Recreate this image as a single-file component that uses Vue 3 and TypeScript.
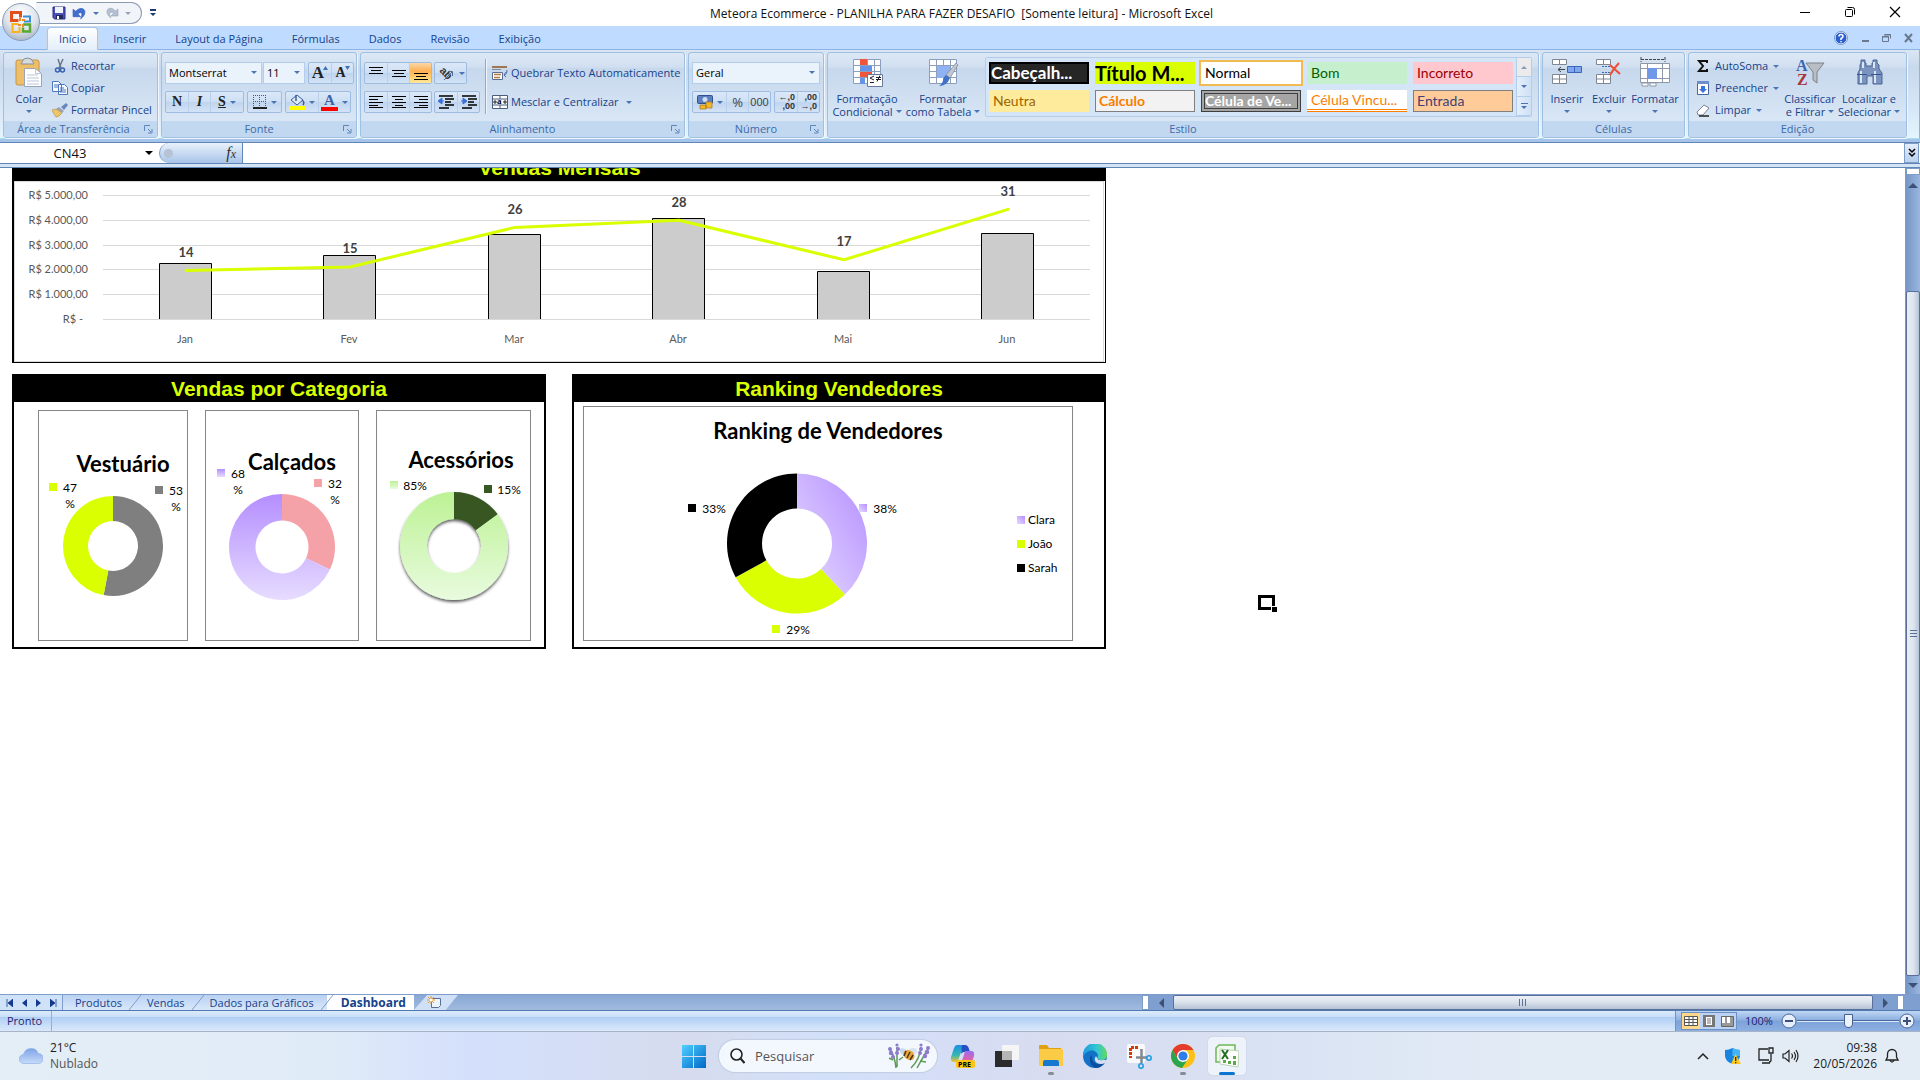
<script setup lang="ts">
interface Slice { value: number; fill: string }
interface Tag { x: number; y: number; fill: string; lines: string[] }
interface Donut { title: string; tx: number; ty: number; w: number; h: number; cx: number; cy: number; r: number; shadow?: boolean; slices: Slice[]; tags: Tag[] }

const ribbonTabs = ['Início', 'Inserir', 'Layout da Página', 'Fórmulas', 'Dados', 'Revisão', 'Exibição']
const sheetTabs = ['Produtos', 'Vendas', 'Dados para Gráficos', 'Dashboard']

const cellStyles = [
  { name: 'Cabeçalh...', cls: 'head' },
  { name: 'Título M...', cls: 'main-title' },
  { name: 'Normal', cls: 'normal' },
  { name: 'Bom', cls: 'good' },
  { name: 'Incorreto', cls: 'bad' },
  { name: 'Neutra', cls: 'neutral' },
  { name: 'Cálculo', cls: 'calc' },
  { name: 'Célula de Ve...', cls: 'check' },
  { name: 'Célula Vincu...', cls: 'linked' },
  { name: 'Entrada', cls: 'entry' },
]

const months = [
  { name: 'Jan', revenue: 2260, orders: 14, labelY: 76 },
  { name: 'Fev', revenue: 2590, orders: 15, labelY: 72 },
  { name: 'Mar', revenue: 3430, orders: 26, labelY: 33 },
  { name: 'Abr', revenue: 4080, orders: 28, labelY: 26 },
  { name: 'Mai', revenue: 1940, orders: 17, labelY: 65 },
  { name: 'Jun', revenue: 3480, orders: 31, labelY: 15 },
]
const axis = ['R$ 5.000,00', 'R$ 4.000,00', 'R$ 3.000,00', 'R$ 2.000,00', 'R$ 1.000,00']
const baseY = 138
const plotH = 124
const monthX = (i: number) => 172 + Math.round(i * 164.4)
const revenueY = (v: number) => Math.round(baseY - (v / 5000) * plotH)
const orderLine = months.map((m, i) => `${monthX(i)},${(140 - m.orders * 3.6).toFixed(1)}`).join(' ')

function ring(cx: number, cy: number, r: number, slices: Slice[]) {
  let sum = 0
  const inner = r / 2
  return slices.map((s) => {
    const a = (sum / 100) * 2 * Math.PI
    sum += s.value
    const b = (sum / 100) * 2 * Math.PI
    const big = s.value > 50 ? 1 : 0
    const p = (rad: number, t: number) => `${(cx + rad * Math.sin(t)).toFixed(2)} ${(cy - rad * Math.cos(t)).toFixed(2)}`
    return { fill: s.fill, d: `M${p(r, a)}A${r} ${r} 0 ${big} 1 ${p(r, b)}L${p(inner, b)}A${inner} ${inner} 0 ${big} 0 ${p(inner, a)}Z` }
  })
}

const categories: Donut[] = [
  {
    title: 'Vestuário', tx: 84, ty: 61, w: 148, h: 229, cx: 74, cy: 135, r: 50,
    slices: [{ value: 53, fill: '#7f7f7f' }, { value: 47, fill: '#d9ff00' }],
    tags: [{ x: 10, y: 72, fill: '#d9ff00', lines: ['47', '%'] }, { x: 116, y: 75, fill: '#7f7f7f', lines: ['53', '%'] }],
  },
  {
    title: 'Calçados', tx: 86, ty: 59, w: 152, h: 229, cx: 76, cy: 136, r: 53,
    slices: [{ value: 32, fill: '#f5a1a8' }, { value: 68, fill: 'url(#lilac)' }],
    tags: [{ x: 11, y: 58, fill: 'url(#lilac)', lines: ['68', '%'] }, { x: 108, y: 68, fill: '#f5a1a8', lines: ['32', '%'] }],
  },
  {
    title: 'Acessórios', tx: 84, ty: 57, w: 153, h: 229, cx: 77, cy: 135, r: 54, shadow: true,
    slices: [{ value: 15, fill: '#385723' }, { value: 85, fill: 'url(#mint)' }],
    tags: [{ x: 13, y: 70, fill: 'url(#mint)', lines: ['85%'] }, { x: 107, y: 74, fill: '#385723', lines: ['15%'] }],
  },
]

const sellers: Slice[] = [
  { value: 38, fill: 'url(#violet)' },
  { value: 29, fill: '#d9ff00' },
  { value: 33, fill: '#000' },
]
const sellerTags: Tag[] = [
  { x: 104, y: 97, fill: '#000', lines: ['33%'] },
  { x: 275, y: 97, fill: 'url(#violet)', lines: ['38%'] },
  { x: 188, y: 218, fill: '#d9ff00', lines: ['29%'] },
]
const sellerKey = [
  { name: 'Clara', fill: 'url(#violet)' },
  { name: 'João', fill: '#d9ff00' },
  { name: 'Sarah', fill: '#000' },
]
</script>

<template>
  <div class="window">
    <header class="titlebar">
      <div class="quick">
        <button aria-label="Salvar"><svg width="14" height="14"><path d="M1 1h12v12H2.500L1 11.500z" fill="#4a50b8" stroke="#2b2f86" /><path d="M3 1h8v6H3z" fill="#eef2ff" /><path d="M4 9h7v4H4z" fill="#23285e" /><path d="M5 10h2v3H5z" fill="#fff" /></svg></button>
        <button aria-label="Desfazer"><svg width="15" height="15" viewBox="0 0 14 14"><path d="M1 3v7h7L5.500 7.500C8 5 11 6 8 12c6-4 5-11-1-9.500Q5 3 3.500 5z" fill="#3f6fd0" stroke="#3059b4" stroke-width=".6" /></svg></button>
        <i class="car"></i>
        <button aria-label="Refazer"><svg width="14" height="14"><path d="M13 3v7H6l2.500-2.500C6 5 3 6 6 12 0 8 1 1 7 2.500q2 .5 3.500 2.500z" fill="#b4bfd0" stroke="#98a5ba" stroke-width=".6" /></svg></button>
        <i class="car dim"></i>
      </div>
      <button class="more" aria-label="Personalizar"><svg width="6" height="8"><path d="M0 0h6v2H0zM0 4h6L3 7z" fill="#1e3b70" /></svg></button>
      <h1>Meteora Ecommerce - PLANILHA PARA FAZER DESAFIO &nbsp;[Somente leitura] - Microsoft Excel</h1>
      <div class="win-buttons">
        <button aria-label="Minimizar"><svg width="12" height="12"><path d="M1 6.500h10" stroke="#000" /></svg></button>
        <button aria-label="Restaurar"><svg width="12" height="12" fill="none" stroke="#000"><rect x="1.500" y="3.500" width="7" height="7" rx="1" /><path d="M3.500 1.500h5q2 0 2 2v5" /></svg></button>
        <button aria-label="Fechar"><svg width="12" height="12"><path d="M1 1l10 10M11 1L1 11" stroke="#000" stroke-width="1.200" /></svg></button>
      </div>
    </header>

    <button class="orb" aria-label="Botão Office">
      <svg width="40" height="40" viewBox="0 0 40 40">
        <defs><radialGradient id="orbg" cx=".5" cy=".3" r=".7"><stop offset="0" stop-color="#fff" /><stop offset=".6" stop-color="#dfe4ec" /><stop offset="1" stop-color="#aab6c8" /></radialGradient></defs>
        <circle cx="20" cy="20" r="18.500" fill="url(#orbg)" stroke="#8b9bb5" />
        <g fill="none" stroke-width="3">
          <path d="M17.500 18.500h-7v-8h9v5" stroke="#e2501b" />
          <path d="M22 14.500h7v5h-6" stroke="#3c8fd8" stroke-width="2" />
          <path d="M17.500 22h-6v8h7v-5" stroke="#f7b41c" stroke-width="2" />
          <path d="M22 22.500h7v7h-7v-4" stroke="#5aa637" stroke-width="2.500" />
        </g>
        <path d="M18 16h2v3h-2zM21 17h3v2h-3zM17 22h3v2h-3zM21 22h2v3h-2z" fill="#f08a24" />
      </svg>
    </button>

    <nav class="tabs">
      <button v-for="(t, i) in ribbonTabs" :key="t" :class="{ on: i === 0 }">{{ t }}</button>
      <div class="doc-buttons">
        <button aria-label="Ajuda"><svg width="14" height="14"><circle cx="7" cy="7" r="6" fill="#2a5fd0" stroke="#fff" /><circle cx="7" cy="7" r="6.500" fill="none" stroke="#5577b8" stroke-width=".7" /><path d="M5 5.500Q5 3.500 7 3.500t2 2Q9 6.500 7 7.500V9M7 10v1.300" fill="none" stroke="#fff" stroke-width="1.500" /></svg></button>
        <button aria-label="Minimizar pasta"><svg width="10" height="10"><path d="M2 8h7" stroke="#69788f" stroke-width="2" /></svg></button>
        <button aria-label="Restaurar pasta"><svg width="10" height="10"><path d="M2.500 1.500h6v4M.500 3.500h6v5h-6z" fill="none" stroke="#69788f" /><path d="M2 2h7M0 4h7" stroke="#69788f" /></svg></button>
        <button aria-label="Fechar pasta"><svg width="10" height="10"><path d="M1 1l7 8M8 1L1 9" stroke="#69788f" stroke-width="2" /></svg></button>
      </div>
    </nav>

    <div class="ribbon">
      <section class="group g-clip">
        <div class="body">
          <button class="big">
            <svg width="28" height="32"><rect x="1" y="3" width="23" height="25" rx="2" fill="#eebf66" stroke="#c3964a" /><path d="M7 5q1-4 5.500-4T18 5l1 2H6z" fill="#d5dae0" stroke="#8b8f94" /><path d="M9.500 11.500h11l6 5v13h-17z" fill="#fff" stroke="#9aa6b8" /><path d="M20.500 11.500v5h6M12 18h11M12 21h12M12 24h12M12 27h12" stroke="#b9c7da" fill="none" /></svg>
            <span>Colar</span><i class="car"></i>
          </button>
          <div class="stack">
            <button><svg width="16" height="16"><path d="M6 1l3 9M11 1L7 10" stroke="#6a7687" stroke-width="1.500" /><circle cx="5.500" cy="12" r="2" fill="none" stroke="#3c63b0" stroke-width="1.500" /><circle cx="10.500" cy="12" r="2" fill="none" stroke="#3c63b0" stroke-width="1.500" /></svg>Recortar</button>
            <button><svg width="16" height="16"><path d="M.500 1.500h6l3 3v7h-9zM6.500 4.500h6l3 3v7h-9z" fill="#f4f8ff" stroke="#4f77bd" /><path d="M2 5h4M2 7h4M8 8h4M8 10h6M8 12h6" stroke="#4f77bd" /></svg>Copiar</button>
            <button><svg width="16" height="16"><path d="M9 5l5-4 2 2-4 5z" fill="#6c87bb" /><path d="M7 5l5 4-2 2-6-4z" fill="#9aa4b0" /><path d="M4 7l6 4q-3 4-6 4-3-4-4-7z" fill="#edc66c" stroke="#b8893a" stroke-width=".6" /></svg>Formatar Pincel</button>
          </div>
        </div>
        <h2>Área de Transferência<svg class="launch" width="9" height="9"><path d="M.500 6V.500H6M4 4l3 3M8 4v4H4" fill="none" stroke="#5f86bb" /></svg></h2>
      </section>

      <section class="group g-font">
        <div class="body rows">
          <div class="row">
            <span class="combo w-font"><select aria-label="Fonte"><option>Montserrat</option></select><i class="car"></i></span>
            <span class="combo w-size"><select aria-label="Tamanho"><option>11</option></select><i class="car"></i></span>
            <span class="set push"><button class="b22 serif lg" aria-label="Aumentar fonte">A<svg width="5" height="4"><path d="M0 4l2.500-4L5 4z" fill="#3f6fb5" /></svg></button><button class="b22 serif" aria-label="Diminuir fonte">A<svg width="5" height="4"><path d="M0 0h5L2.500 4z" fill="#3f6fb5" /></svg></button></span>
          </div>
          <div class="row">
            <span class="set"><button class="b22 serif"><b>N</b></button><button class="b22 serif"><em>I</em></button><button class="b34 serif"><u>S</u><i class="car"></i></button></span>
            <span class="set push"><button class="b34" aria-label="Bordas"><svg width="14" height="14"><path d="M.500 0v13M6.500 0v13M12.500 0v13M0 .500h13M0 6.500h13" stroke="#555" stroke-dasharray="1 1" /><path d="M0 13h14" stroke="#222" stroke-width="2" /></svg><i class="car"></i></button></span>
            <span class="set push"><button class="b33" aria-label="Preenchimento"><svg width="16" height="16"><path d="M8 1l6 5-6 5-6-5z" fill="#dfe8f5" stroke="#3c5f9c" /><path d="M7 1v6M13 6q3 2 1 5" stroke="#3c5f9c" fill="none" stroke-width="1.500" /><path d="M0 12h16v4H0z" fill="#ff0" /></svg><i class="car"></i></button><button class="b33"><span class="ink">A</span><i class="car"></i></button></span>
          </div>
        </div>
        <h2>Fonte<svg class="launch" width="9" height="9"><path d="M.500 6V.500H6M4 4l3 3M8 4v4H4" fill="none" stroke="#5f86bb" /></svg></h2>
      </section>

      <section class="group g-align">
        <div class="body">
          <div class="rows">
            <div class="row">
              <span class="set"><button class="b23" aria-label="Acima"><svg width="14" height="16"><path d="M0 2.500h14M2 5.500h10M0 8.500h14" stroke="#000" /></svg></button><button class="b23" aria-label="Meio"><svg width="14" height="16"><path d="M0 5.500h14M2 8.500h10M0 11.500h14" stroke="#000" /></svg></button><button class="b23 hot" aria-label="Abaixo"><svg width="14" height="16"><path d="M0 8.500h14M2 11.500h10M0 14.500h14" stroke="#000" /></svg></button></span>
              <span class="set push"><button class="b32" aria-label="Orientação"><svg width="18" height="18"><text x="2" y="9" font-size="11" font-weight="700" fill="#333" transform="rotate(45 4 8)" font-family="Liberation Sans, sans-serif">ab</text><path d="M7 16l8-8M11 7.500h4.500V12" stroke="#566a8a" fill="none" /></svg><i class="car"></i></button></span>
            </div>
            <div class="row">
              <span class="set"><button class="b23" aria-label="Esquerda"><svg width="14" height="14"><path d="M0 1.500h14M0 4.500h9M0 7.500h14M0 10.500h9M0 12.500h14" stroke="#000" /></svg></button><button class="b23" aria-label="Centro"><svg width="14" height="14"><path d="M0 1.500h14M3 4.500h8M0 7.500h14M3 10.500h8M0 12.500h14" stroke="#000" /></svg></button><button class="b23" aria-label="Direita"><svg width="14" height="14"><path d="M0 1.500h14M5 4.500h9M0 7.500h14M5 10.500h9M0 12.500h14" stroke="#000" /></svg></button></span>
              <span class="set push"><button class="b22" aria-label="Diminuir recuo"><svg width="16" height="16"><path d="M1 2h14M7 5h9M7 8h6M7 11h9M1 14h10" stroke="#000" stroke-width="1.500" /><path d="M0 7l4-3v6zM3 7h3" fill="#3a6fd8" stroke="#3a6fd8" /></svg></button><button class="b22" aria-label="Aumentar recuo"><svg width="16" height="16"><path d="M1 2h14M7 5h9M7 8h6M7 11h9M1 14h10" stroke="#000" stroke-width="1.500" /><path d="M6 7L2 4v6zM0 7h3" fill="#3a6fd8" stroke="#3a6fd8" /></svg></button></span>
            </div>
          </div>
          <div class="rows wraps">
            <button class="line"><svg width="16" height="16"><path d="M0 2h15" stroke="#a07850" stroke-width="2" /><path d="M0 4.500h9" stroke="#7f8b9c" /><path d="M.500 7.500h10v7H.500z" fill="#fff" stroke="#5b6f92" /><path d="M2 9.500h7M2 12.500h6" stroke="#b57b3c" stroke-width="1.500" /><path d="M15 5q0 5-3 5M14 7l-2 3 2 2" fill="none" stroke="#4b6cab" /></svg>Quebrar Texto Automaticamente</button>
            <button class="line"><svg width="16" height="16"><path d="M.500 1.500h15v13H.500z" fill="#fff" stroke="#4a5d7e" /><path d="M0 5h16M0 11h16M8 1v4M8 11v4" stroke="#4a5d7e" /><path d="M1 8h4M15 8h-4M3 6v4M13 6v4" stroke="#222" /><text x="5" y="10" font-size="9" font-weight="700" font-family="Liberation Serif, serif">a</text></svg>Mesclar e Centralizar<i class="car"></i></button>
          </div>
        </div>
        <h2>Alinhamento<svg class="launch" width="9" height="9"><path d="M.500 6V.500H6M4 4l3 3M8 4v4H4" fill="none" stroke="#5f86bb" /></svg></h2>
      </section>

      <section class="group g-num">
        <div class="body rows">
          <div class="row"><span class="combo w-num"><select aria-label="Formato de número"><option>Geral</option></select><i class="car"></i></span></div>
          <div class="row">
            <span class="set"><button class="b34" aria-label="Moeda"><svg width="16" height="16"><rect x=".500" y="1.500" width="15" height="8" rx="1" fill="#5d7fc0" stroke="#2e4e8f" /><circle cx="8" cy="5.500" r="2.500" fill="#cfdcf3" /><path d="M9 8h6v6H9zM3 11h6v4H3z" fill="#f2b52e" stroke="#a97410" stroke-width=".7" /></svg><i class="car"></i></button><button class="b23 num">%</button><button class="b23 num tight">000</button></span>
            <span class="set push"><button class="b22 dec"><span>&larr;,0</span><span>,00</span></button><button class="b22 dec"><span>,00</span><span>&rarr;,0</span></button></span>
          </div>
        </div>
        <h2>Número<svg class="launch" width="9" height="9"><path d="M.500 6V.500H6M4 4l3 3M8 4v4H4" fill="none" stroke="#5f86bb" /></svg></h2>
      </section>

      <section class="group g-style">
        <div class="body">
          <button class="big w72">
            <svg width="32" height="32"><path d="M2.500 2.500h27v24h-27zM2 8.500h28M2 14.500h28M2 20.500h28M9.500 2v25M16.500 2v25M23.500 2v25" fill="#fff" stroke="#8c9fbf" /><path d="M9 2h7v6H9zM9 15h12v5H9z" fill="#f0553c" /><path d="M9 9h12v5H9zM9 21h5v6H9z" fill="#6493e8" /><path d="M16.500 17.500h15v12h-15z" fill="#fff" stroke="#667a9c" /><path d="M23 19l-4 2 4 2M19 25.500h4M25 20.500h5M25 22.500h5M29 18.500l-3 6" fill="none" stroke="#222" /></svg>
            <span>Formatação</span><span>Condicional<i class="car"></i></span>
          </button>
          <button class="big w80">
            <svg width="32" height="32"><path d="M2.500 2.500h27v24h-27zM2 8.500h28M2 14.500h28M2 20.500h28M9.500 2v25M16.500 2v25M23.500 2v25" fill="#fff" stroke="#8c9fbf" /><path d="M10 9h13v12H10z" fill="#8fb2f2" /><path d="M29 6l2 2-8 13-4-3z" fill="#c2c8d2" stroke="#7a828f" stroke-width=".7" /><path d="M19 18l4 3q-3 8-11 8 4-3 4-6t3-5z" fill="#4373c6" /></svg>
            <span>Formatar</span><span>como Tabela<i class="car"></i></span>
          </button>
          <div class="gallery">
            <div class="swatches"><button v-for="s in cellStyles" :key="s.name" :class="s.cls">{{ s.name }}</button></div>
            <div class="gal-scroll"><button disabled aria-label="Acima"><i class="car up"></i></button><button aria-label="Abaixo"><i class="car"></i></button><button class="bar" aria-label="Mais"><i class="car"></i></button></div>
          </div>
        </div>
        <h2>Estilo</h2>
      </section>

      <section class="group g-cells">
        <div class="body">
          <button class="big w42">
            <svg width="32" height="32"><path d="M1.500 2.500h14v5h-14zM8.500 2v6M1.500 17.500h14v9h-14zM8.500 17v10M1 22h15" fill="#fff" stroke="#7f8694" /><path d="M16.500 9.500h14v6h-14zM23.500 9v7" fill="#7fa6ee" stroke="#3c66b8" /><path d="M7 12.500h7M10 10l-3 2.500 3 2.500" fill="none" stroke="#444" /></svg>
            <span>Inserir</span><i class="car"></i>
          </button>
          <button class="big w42">
            <svg width="32" height="32"><path d="M3.500 2.500h14v5h-14zM10.500 2v6M3.500 17.500h14v9h-14zM10.500 17v10M3 22h15" fill="#fff" stroke="#7f8694" /><path d="M9 9.500h11M9 15.500h11" stroke="#3c66b8" stroke-dasharray="2 1" /><path d="M17 8l10 9M26 6q-5 5-9 12" fill="none" stroke="#ef4d33" stroke-width="2" /></svg>
            <span>Excluir</span><i class="car"></i>
          </button>
          <button class="big w50">
            <svg width="32" height="32"><path d="M1.500 6.500h29v19h-29zM8.500 6v20M23.500 6v20M1 11.500h30M1 21.500h30" fill="#fff" stroke="#8f98a8" /><path d="M9 11h9v11H9z" fill="#6f99e8" /><path d="M2 2.500h24M2 0v5M26 0v5" stroke="#444" stroke-dasharray="3 1" /><path d="M3 26h6v3H3zM11 26h6v3h-6z" fill="#fff" stroke="#8f98a8" /></svg>
            <span>Formatar</span><i class="car"></i>
          </button>
        </div>
        <h2>Células</h2>
      </section>

      <section class="group g-edit">
        <div class="body">
          <div class="stack wide">
            <button><svg width="14" height="14"><path d="M11 4V2H3l4 5-4 5h8v-2" fill="none" stroke="#111" stroke-width="2" /></svg>AutoSoma<i class="car"></i></button>
            <button><svg width="14" height="16"><path d="M1.500 1.500h11v13h-11z" fill="#fff" stroke="#45669f" /><path d="M1 1h12v3H1z" fill="#6d8fce" /><path d="M5 6h4v3h2l-4 4-4-4h2z" fill="#3a74dd" /></svg>Preencher<i class="car"></i></button>
            <button><svg width="14" height="14"><path d="M8 2l5 3-6 7H2L1 9z" fill="#fff" stroke="#77839a" /><path d="M3 13h10" stroke="#222" stroke-width="1.500" /></svg>Limpar<i class="car"></i></button>
          </div>
          <button class="big w60">
            <svg width="32" height="32" font-family="Liberation Serif, serif" font-size="16" font-weight="700"><path d="M12 6h18l-7 9v11l-4-3v-8z" fill="#b9bdc4" stroke="#7d828b" /><text x="2" y="14" fill="#3f63b3">A</text><text x="3" y="28" fill="#a6373b">Z</text></svg>
            <span>Classificar</span><span>e Filtrar<i class="car"></i></span>
          </button>
          <button class="big w58">
            <svg width="32" height="32"><path d="M8 3h4v3h1v3h6V6h1V3h4v3l2 2v4l3 4v11h-9v-8h-6v8H5V16l2-4V8l1-2z" fill="#7b94bf" stroke="#4a6595" /><path d="M8 14v12M22 14v12M10 5v6M21 5v6" stroke="#dbe5f4" stroke-width="2" /><path d="M4 17.500h10M18 17.500h10" stroke="#39568c" /></svg>
            <span>Localizar e</span><span>Selecionar<i class="car"></i></span>
          </button>
        </div>
        <h2>Edição</h2>
      </section>
    </div>

    <div class="formula">
      <input class="cell-name" aria-label="Caixa de nome" value="CN43" />
      <button class="name-drop" aria-label="Nomes"><i class="car black"></i></button>
      <div class="fx-pad"><i class="dot"></i><em>f<small>x</small></em></div>
      <input class="fx-input" aria-label="Barra de fórmulas" />
      <button class="fx-more" aria-label="Expandir"><svg width="8" height="10"><path d="M1 1l3 3 3-3M1 5l3 3 3-3" fill="none" stroke="#000" stroke-width="1.500" /></svg></button>
    </div>

    <main class="work">
      <div class="sheet">
        <div class="dash">
          <section class="panel monthly">
            <h2>Vendas Mensais</h2>
            <svg width="1091" height="181" class="chart">
              <rect x=".5" y=".5" width="1089" height="180" fill="#fff" stroke="#d9d9d9" />
              <path v-for="n in 6" :key="n" :d="`M89 ${Math.round(14 + (n - 1) * 24.8) + .5}h987`" stroke="#d9d9d9" />
              <g class="ax">
                <text v-for="(a, i) in axis" :key="a" x="74" :y="18 + Math.round(i * 24.8)" text-anchor="end">{{ a }}</text>
                <text x="69" y="142" text-anchor="end">R$ -</text>
                <text v-for="(m, i) in months" :key="m.name" :x="monthX(i) - 1" y="162" text-anchor="middle">{{ m.name }}</text>
              </g>
              <path v-for="(m, i) in months" :key="m.name" :d="`M${monthX(i) - 26.5} ${baseY}V${revenueY(m.revenue) + .5}h52V${baseY}`" fill="#ccc" stroke="#000" />
              <polyline :points="orderLine" fill="none" stroke="#d9ff00" stroke-width="3" stroke-linecap="round" stroke-linejoin="round" />
              <text v-for="(m, i) in months" :key="m.name" class="pt" :x="monthX(i)" :y="m.labelY" text-anchor="middle">{{ m.orders }}</text>
            </svg>
          </section>

          <div class="pair">
            <section class="panel">
              <h2>Vendas por Categoria</h2>
              <div class="cats">
                <svg v-for="c in categories" :key="c.title" class="chart framed" :width="c.w" :height="c.h">
                  <defs>
                    <linearGradient id="lilac" x1="0" y1="0" x2="0" y2="1"><stop offset="0" stop-color="#b48eff" /><stop offset="1" stop-color="#e7dcff" /></linearGradient>
                    <linearGradient id="mint" x1="0" y1="0" x2="0" y2="1"><stop offset="0" stop-color="#bcf294" /><stop offset="1" stop-color="#e9fbdf" /></linearGradient>
                    <filter id="drop" x="-20%" y="-20%" width="140%" height="140%"><feDropShadow dx="0" dy="2" stdDeviation="1.500" flood-color="#000" flood-opacity=".65" /></filter>
                  </defs>
                  <text class="ct" :x="c.tx" :y="c.ty" text-anchor="middle">{{ c.title }}</text>
                  <g :filter="c.shadow ? 'url(#drop)' : undefined"><path v-for="p in ring(c.cx, c.cy, c.r, c.slices)" :key="p.d" :d="p.d" :fill="p.fill" /></g>
                  <g v-for="t in c.tags" :key="t.lines[0]">
                    <rect :x="t.x" :y="t.y" width="8" height="8" :fill="t.fill" />
                    <text v-for="(l, i) in t.lines" :key="l" :x="t.x + (t.lines.length > 1 ? 21 : 25)" :y="t.y + 9 + i * 16" text-anchor="middle">{{ l }}</text>
                  </g>
                </svg>
              </div>
            </section>

            <section class="panel">
              <h2>Ranking Vendedores</h2>
              <div class="rank">
                <svg class="chart framed" width="488" height="233">
                  <defs><linearGradient id="violet" x1="0" y1="1" x2="1" y2="0"><stop offset="0" stop-color="#e7dcff" /><stop offset="1" stop-color="#b48eff" /></linearGradient></defs>
                  <text class="ct" x="244" y="32" text-anchor="middle">Ranking de Vendedores</text>
                  <path v-for="p in ring(213, 136.5, 70, sellers)" :key="p.d" :d="p.d" :fill="p.fill" />
                  <g v-for="t in sellerTags" :key="t.lines[0]">
                    <rect :x="t.x" :y="t.y" width="8" height="8" :fill="t.fill" />
                    <text :x="t.x + 26" :y="t.y + 9" text-anchor="middle">{{ t.lines[0] }}</text>
                  </g>
                  <g v-for="(k, i) in sellerKey" :key="k.name">
                    <rect x="433" :y="109 + i * 24" width="8" height="8" :fill="k.fill" />
                    <text x="444" :y="117 + i * 24">{{ k.name }}</text>
                  </g>
                </svg>
              </div>
            </section>
          </div>
        </div>
        <div class="cursor"><i></i></div>
      </div>
      <div class="vbar">
        <i class="split"></i>
        <button aria-label="Rolar para cima"><i class="car up"></i></button>
        <div class="thumb"></div>
        <button class="down" aria-label="Rolar para baixo"><i class="car"></i></button>
      </div>
    </main>

    <div class="sheetbar">
      <div class="seek">
        <button aria-label="Primeira"><svg width="7" height="8"><path d="M1 0v8M7 0v8L2 4z" fill="#123a8c" stroke="#123a8c" stroke-width=".8" /></svg></button>
        <button aria-label="Anterior"><svg width="5" height="8"><path d="M5 0v8L0 4z" fill="#123a8c" /></svg></button>
        <button aria-label="Próxima"><svg width="5" height="8"><path d="M0 0v8l5-4z" fill="#123a8c" /></svg></button>
        <button aria-label="Última"><svg width="7" height="8"><path d="M6 0v8M0 0v8l5-4z" fill="#123a8c" stroke="#123a8c" stroke-width=".8" /></svg></button>
      </div>
      <button v-for="(t, i) in sheetTabs" :key="t" class="stab" :class="{ on: i === 3 }">{{ t }}<svg width="12" height="15" class="slant"><path d="M12 0L0 15" stroke="#7f9dca" /></svg></button>
      <button class="stab add" aria-label="Nova planilha"><svg width="16" height="13"><path d="M4.500 2.500h9v7l-2 2h-7z" fill="#eef4fc" stroke="#5a6f96" /><path d="M4 0v8M0 4h8M1 1l6 6M7 1L1 7" stroke="#e29a2c" /><circle cx="4" cy="4" r="1.500" fill="#fff" /></svg></button>
      <div class="hbar">
        <i class="split"></i>
        <button aria-label="Rolar para a esquerda"><svg width="5" height="10"><path d="M5 0v10L0 5z" fill="#3d5076" /></svg></button>
        <div class="thumb"><i></i></div>
        <button aria-label="Rolar para a direita"><svg width="5" height="10"><path d="M0 0v10l5-5z" fill="#3d5076" /></svg></button>
        <i class="split"></i>
      </div>
    </div>

    <div class="status">
      <span class="ready">Pronto</span>
      <div class="zoom">
        <div class="views">
          <button class="on" aria-label="Normal"><svg width="14" height="11"><path d="M.500.500h13v9H.500zM5 0v10M9 0v10M0 3.500h14M0 6.500h14" fill="#fff" stroke="#555" /></svg></button>
          <button aria-label="Layout"><svg width="12" height="12"><path d="M0 0h12v12H0z" fill="#777" /><path d="M3 2h6v8H3z" fill="#fff" /><path d="M4 4h4M4 6h4M4 8h4" stroke="#777" /></svg></button>
          <button aria-label="Quebras"><svg width="13" height="11"><path d="M.500.500h12v10H.500z" fill="#999" stroke="#666" /><path d="M1 1h3v6H1zM6 1h3v6H6z" fill="#fff" /></svg></button>
        </div>
        <span>100%</span>
        <button class="rnd" aria-label="Reduzir"><svg width="16" height="16"><circle cx="8" cy="8" r="7" fill="#e6effb" stroke="#4a6696" /><path d="M4 8h8" stroke="#3c5078" stroke-width="2" /></svg></button>
        <input type="range" min="0" max="200" value="100" aria-label="Zoom" />
        <button class="rnd" aria-label="Ampliar"><svg width="16" height="16"><circle cx="8" cy="8" r="7" fill="#e6effb" stroke="#4a6696" /><path d="M4 8h8M8 4v8" stroke="#3c5078" stroke-width="2" /></svg></button>
      </div>
    </div>

    <footer class="taskbar">
      <div class="weather">
        <svg width="24" height="16"><defs><linearGradient id="cloud" x1="0" y1="0" x2="0" y2="1"><stop offset="0" stop-color="#7fa4e6" /><stop offset="1" stop-color="#c6dafa" /></linearGradient></defs><path d="M5 15.500a4.500 4.500 0 0 1-.5-9Q6 .500 12 .500t7 5a5 5 0 0 1 .500 10z" fill="url(#cloud)" stroke="#86a9e4" stroke-width=".6" /></svg>
        <p>21°C<br /><span>Nublado</span></p>
      </div>
      <div class="apps">
        <button class="app" aria-label="Iniciar"><svg width="24" height="24"><defs><linearGradient id="win" x1="0" y1="0" x2="1" y2="1"><stop offset="0" stop-color="#4fd0ff" /><stop offset="1" stop-color="#0067c8" /></linearGradient></defs><path d="M0 1h11v11H0zM12 1h12v11H12zM0 13h11v11H0zM12 13h12v11H12z" fill="url(#win)" /></svg></button>
        <label class="search">
          <svg width="15" height="16"><circle cx="6.500" cy="6.500" r="5.500" fill="none" stroke="#222" stroke-width="1.600" /><path d="M10.500 10.500l4 4.500" stroke="#222" stroke-width="2" /></svg>
          <input aria-label="Pesquisar" placeholder="Pesquisar" />
          <svg width="44" height="26"><g stroke="#5d9b57" fill="none" stroke-width="1.500"><path d="M3 6q5 8 6 19M10 4q0 10 0 20M41 6q-6 10-11 19M34 4q-1 12-10 21M6 17l-4-2M33 18l6 1M12 17l4-3" /></g><g fill="#8d7bd0"><circle cx="3" cy="6" r="2" /><circle cx="4" cy="10" r="2.200" /><circle cx="6" cy="14" r="2" /><circle cx="10" cy="2" r="1.600" /><circle cx="11" cy="6" r="2" /><circle cx="10" cy="10" r="2" /><circle cx="41" cy="5" r="2" /><circle cx="40" cy="9" r="2.300" /><circle cx="38" cy="13" r="2.200" /><circle cx="34" cy="2" r="1.600" /><circle cx="34" cy="6" r="2" /><circle cx="33" cy="10" r="2" /></g><ellipse cx="17" cy="9" rx="5" ry="3" fill="#c9d8f2" transform="rotate(35 17 9)" /><ellipse cx="26" cy="8" rx="4" ry="3" fill="#d8e3f6" /><ellipse cx="22" cy="12" rx="6" ry="4.500" fill="#e8a83a" transform="rotate(35 22 12)" /><path d="M19 8l-2 5M23 9l-3 6M26 12l-3 5" stroke="#4a3416" stroke-width="1.500" /></svg>
        </label>
        <button class="app" aria-label="Copilot"><svg width="26" height="26"><defs><linearGradient id="copa" x1="0" y1="0" x2="0" y2="1"><stop offset="0" stop-color="#1b8fe8" /><stop offset=".6" stop-color="#35b7b0" /><stop offset="1" stop-color="#f2c230" /></linearGradient><linearGradient id="copb" x1="0" y1="0" x2="0" y2="1"><stop offset="0" stop-color="#9a6cf0" /><stop offset="1" stop-color="#f2609a" /></linearGradient></defs><path d="M7 2h9q-3 0-4 4l-3 9q-1 4-4 4H4Q0 19 1 14L4 5q1-3 3-3z" fill="url(#copa)" /><path d="M12 2h3q3 0 4 4l1 3h-6q-2 0-3 2z" fill="#2350c4" /><path d="M15 8h6q4 0 3 5l-2 6H10q2-1 3-4l2-7z" fill="url(#copb)" /><rect x="6" y="17" width="19" height="8" rx="2" fill="#fbc618" /><text x="8" y="24" font-size="7" font-weight="700" font-family="Open Sans, sans-serif">PRE</text></svg></button>
        <button class="app" aria-label="Visão de tarefas"><svg width="24" height="22"><path d="M7 0h17v15H7z" fill="#f5f5f5" /><path d="M0 6h17v16H0z" fill="#2b2b2b" /><path d="M7 6h10v9H7z" fill="#b5b5b5" /></svg></button>
        <button class="app run" aria-label="Explorador"><svg width="24" height="22"><path d="M0 1q0-1 1-1h7l2 3h12v4H0z" fill="#e0a010" /><path d="M0 4h23q1 0 1 1v16H1q-1 0-1-1z" fill="#fccb45" /><path d="M4 21v-4q0-2 2-2h12q2 0 2 2v4z" fill="#1679cf" /></svg></button>
        <button class="app" aria-label="Edge"><svg width="24" height="24"><defs><linearGradient id="edge" x1="0" y1="0" x2="1" y2="0"><stop offset="0" stop-color="#1a9be0" /><stop offset=".6" stop-color="#35c8d0" /><stop offset="1" stop-color="#64d85a" /></linearGradient></defs><circle cx="12" cy="12" r="12" fill="#1272c8" /><path d="M0 11A12 12 0 0 1 24 11q0 5-5 5-4 0-5-2 2-2 0-5-4-5-10-1-3 2-4 5z" fill="url(#edge)" /><path d="M9 11q-1 7 5 9 5 1 8-2-3 6-10 6Q6 21 7 14q0-2 2-3z" fill="#0d4f9e" /><path d="M14 14q1 3 6 2l4 0-2 3q-4 2-8 0-4-3-1-7z" fill="#d9def2" /></svg></button>
        <button class="app" aria-label="Captura"><svg width="25" height="25"><rect x="0" y="0" width="18" height="19" rx="2" fill="#fafafa" /><path d="M11 3.500H3.500V14" fill="none" stroke="#d83b01" stroke-width="3" stroke-dasharray="3 1" /><path d="M9 13.500h11M14.500 5v14" stroke="#85898f" stroke-width="2.500" /><circle cx="22" cy="14" r="2.200" fill="none" stroke="#1d9be0" stroke-width="1.500" /><circle cx="14" cy="22" r="2.200" fill="none" stroke="#1d9be0" stroke-width="1.500" /></svg></button>
        <button class="app run" aria-label="Chrome"><svg width="24" height="24"><circle cx="12" cy="12" r="12" fill="#fbc116" /><path d="M1.600 6A12 12 0 0 1 22.400 6H12l-5.200 9z" fill="#e33b2e" /><path d="M1.600 6A12 12 0 0 0 11 24l6-9-5 3-5-3z" fill="#2da44e" /><circle cx="12" cy="12" r="6" fill="#fff" /><circle cx="12" cy="12" r="4.600" fill="#2f7de9" /></svg></button>
        <button class="app act" aria-label="Excel"><svg width="24" height="24"><path d="M4 1h16v17H1V4z" fill="#f3faf0" stroke="#6fb75c" stroke-width="1.500" /><path d="M5 5l19 2-1 16-18-3z" fill="#fff" stroke="#b9d3b2" /><path d="M8 16h3v3H8zM13 17h3v3h-3zM18 17h3v4h-3zM18 12h3v3h-3z" fill="#5aaa48" /><path d="M7 6l6 9M13 6L7 15" stroke="#246b22" stroke-width="2" /></svg></button>
      </div>
      <div class="tray">
        <svg width="12" height="8"><path d="M1 7l5-5 5 5" fill="none" stroke="#222" stroke-width="1.500" /></svg>
        <svg width="16" height="17"><path d="M7.500 0Q11 2 15 2v6q0 5-7.500 8Q0 13 0 8V2q4 0 7.500-2z" fill="#1784e0" /><path d="M7.500 0Q11 2 15 2v6H7.500z" fill="#43b4f5" /><path d="M10.500 6l5.500 10H6z" fill="#ffc81f" /><path d="M10.700 9v4M10.700 14v1.200" stroke="#222" stroke-width="1.300" /></svg>
        <svg width="18" height="18" fill="none" stroke="#222" stroke-width="1.300"><path d="M11 2H2v11h10M5 16h8M14 7v6q0 2-2 2M12 1h4v5h-4z" /></svg>
        <svg width="17" height="14" fill="none" stroke="#222" stroke-width="1.200"><path d="M1 5h2l4-3.500v11L3 9H1zM9.500 4.500q2 2.500 0 5M12 3q3 4 0 8M14 1q4 6 0 12" /></svg>
        <p>09:38<br />20/05/2026</p>
        <svg width="14" height="16" fill="none" stroke="#222" stroke-width="1.300"><path d="M1 12l1.500-3V6a4.500 4.500 0 0 1 9 0v3l1.500 3zM5 12.500q2 3 4 0" /></svg>
      </div>
    </footer>
  </div>
</template>

<style>
body { margin: 0; }
</style>

<style scoped>
* { box-sizing: border-box; }
.window { position: relative; display: flex; flex-direction: column; min-height: 100vh; background: #bfdbff; font: 12px/16px "Open Sans", "Noto Sans", sans-serif; color: #15428b; overflow: hidden; }
button { font: inherit; color: inherit; padding: 0; margin: 0; border: 0; background: none; display: flex; align-items: center; justify-content: center; white-space: nowrap; }
svg { display: block; flex: none; }
h1, h2, p { margin: 0; font: inherit; }
.car { flex: none; width: 0; height: 0; border: 3px solid transparent; border-top-color: #4a74b4; border-bottom: 0; }
.car.up { border-top: 0; border-bottom: 3px solid #8a9ab5; }
.car.dim { border-top-color: #99a5b8; }
.car.black { border-width: 4px 4px 0; border-top-color: #000; }

.titlebar { position: relative; height: 26px; background: #fff; display: flex; align-items: flex-start; }
.quick { display: flex; align-items: center; gap: 6px; height: 22px; width: 106px; margin: 2px 0 0 36px; padding-left: 15px; border: 1px solid #8d9bb3; border-left-color: transparent; border-radius: 0 11px 11px 0; background: #f1f4f9; }
.more { margin: 9px 0 0 8px; }
h1 { flex: 1; text-align: center; color: #111; line-height: 27px; padding-right: 32px; white-space: nowrap; }
.win-buttons { display: flex; gap: 33px; padding: 6px 19px 0 0; }
.orb { position: absolute; left: 1px; top: 2px; z-index: 3; }

.tabs { display: flex; gap: 1px; height: 24px; padding: 1px 6px 0 47px; border-bottom: 1px solid #8db2e3; font-size: 11px; }
.tabs > button { padding: 0 13px; height: 23px; border: 1px solid transparent; }
.tabs > .on { padding: 0 11px; background: linear-gradient(#fff, #e3eefb); border-color: #a5c4ee; border-bottom: 0; border-radius: 4px 4px 0 0; box-shadow: 0 0 2px #e8d9a8; }
.doc-buttons { display: flex; align-items: center; gap: 12px; margin-left: auto; }

.ribbon { display: flex; gap: 3px; height: 89px; padding: 2px 12px 0 3px; background: linear-gradient(#dbe6f4, #c8d9ed 20%, #d9e8f8 70%, #e4f5fd); border-right: 1px solid #8db2e3; border-bottom: 1px solid #a9e0ee; font-size: 11px; }
.group { display: flex; flex-direction: column; height: 86px; border: 1px solid #9fc0e0; border-radius: 3px; background: linear-gradient(#dde8f5, #d0dff0 17%, #c7d8ed 18%, #d8e6f5 80%); box-shadow: 1px 1px 0 #eff6fd; overflow: hidden; }
.group > h2 { position: relative; height: 16px; line-height: 16px; text-align: center; color: #3e6aaa; background: #c1d8f0; }
.launch { position: absolute; right: 4px; top: 4px; }
.g-clip h2 { padding-right: 14px; }
.g-clip { width: 155px; }
.g-font { width: 196px; }
.g-align { width: 325px; }
.g-num { width: 136px; }
.g-style { flex: 1; min-width: 712px; }
.g-cells { width: 143px; }
.g-edit { width: 219px; }
.body { flex: 1; display: flex; padding-left: 3px; }
.big { flex-direction: column; justify-content: flex-start; width: 44px; padding-top: 4px; line-height: 13px; }
.big svg { height: 35px; }
.big > span { display: flex; align-items: center; gap: 3px; }
.big > .car { margin-top: 5px; }
.w72 { width: 72px; }
.w80 { width: 80px; }
.w42 { width: 42px; }
.w50 { width: 50px; }
.w58 { width: 58px; }
.w60 { width: 60px; }
.stack { display: flex; flex-direction: column; padding-top: 2px; }
.stack button { height: 22px; gap: 3px; justify-content: flex-start; padding-left: 1px; }
.stack.wide { width: 88px; }
.stack.wide button { gap: 5px; padding-left: 4px; }
.rows { display: flex; flex-direction: column; gap: 7px; padding-top: 9px; }
.row { display: flex; height: 22px; }
.push { margin-left: 3px; }
.set { display: flex; border: 1px solid #9ebbe0; border-radius: 2px; background: linear-gradient(#dbe8f8, #cddff4 50%, #bfd4ef 51%, #d3e3f6); }
.set button { gap: 4px; }
.set button + button { border-left: 1px solid #b9cfea; }
.b22 { width: 22px; }
.b23 { width: 22px; }
.b32 { width: 31px; }
.b33 { width: 32px; }
.b34 { width: 33px; }
.serif { font: 700 14px/18px "Liberation Serif", serif; color: #222; }
.serif.lg { font-size: 17px; }
.set .serif svg { align-self: flex-start; margin: 3px 0 0 -5px; }
.ink { font: 700 15px/13px "Liberation Serif", serif; color: #3c62a8; border-bottom: 4px solid #f00; padding: 0 3px; }
.hot { background: linear-gradient(#fbd7a8, #ffb054 40%, #ffd878 80%, #ffe79e); }
.combo { position: relative; display: flex; align-items: center; border: 1px solid #b4cdec; background: #eaf2fb; }
.combo + .combo { margin-left: 1px; }
.combo select { appearance: none; width: 100%; height: 100%; padding: 0 3px; border: 0; background: none; font: inherit; color: #000; }
.combo .car { position: absolute; right: 4px; top: 8px; }
.w-font { width: 97px; }
.w-size { width: 42px; }
.w-num { width: 128px; }
.num { color: #444; font-size: 13px; }
.tight { font: 11px "Liberation Sans", sans-serif; }
.set .dec { flex-direction: column; gap: 0; align-items: flex-end; font: 700 9px/9px "Liberation Sans", sans-serif; color: #333; padding-right: 2px; }
.wraps { margin: 6px 0 7px 3px; padding: 3px 0 0 6px; border-left: 1px solid #8fa8cc; box-shadow: inset 1px 0 #eef5fc; }
.g-align .push { margin-left: 2px; }
.g-align .row { min-width: 118px; }
.line { height: 22px; gap: 3px; justify-content: flex-start; }
.line .car { margin-left: 4px; }
.gallery { flex: 1; display: flex; height: 60px; margin: 4px 6px 0 2px; border: 1px solid #b3cdeb; border-radius: 2px; background: #d4e5f8; }
.swatches { flex: 1; display: grid; grid-template-columns: repeat(5, 1fr); gap: 6px; padding: 4px 3px; }
.swatches button { height: 22px; padding: 0 4px; justify-content: flex-start; font: 14px/20px Lato, sans-serif; overflow: hidden; color: #000; background: #fff; }
.swatches .head { background: #262626; border: 2px solid #000; padding: 0; font-weight: 700; font-size: 17px; color: #fff; }
.swatches .main-title { background: #d9ff00; font-weight: 700; font-size: 20px; padding: 0; }
.swatches .normal { outline: 2px solid #f2bb52; }
.swatches .good { background: #c6efce; color: #006100; }
.swatches .bad { background: #ffc7ce; color: #9c0006; }
.swatches .neutral { background: #ffeb9c; color: #9c6500; }
.swatches .calc { background: #f2f2f2; color: #fa7d00; border: 1px solid #7f7f7f; font-weight: 700; padding: 0 3px; }
.swatches .check { background: #a5a5a5; color: #fff; border: 4px double #3f3f3f; padding: 0; font-weight: 700; }
.swatches .linked { color: #fa7d00; border-bottom: 3px double #ff8001; }
.swatches .entry { background: #ffcc99; color: #3f3f76; border: 1px solid #7f7f7f; padding: 0 3px; }
.gal-scroll { width: 15px; display: flex; flex-direction: column; border-left: 1px solid #b3cdeb; }
.gal-scroll button { flex: 1; border-bottom: 1px solid #b3cdeb; background: linear-gradient(90deg, #e4effb, #cfe0f5); }
.gal-scroll button:disabled { background: #ebebeb; }
.gal-scroll .bar { flex-direction: column; }
.gal-scroll .bar::before { content: ""; width: 7px; height: 1px; margin-bottom: 2px; background: #4a74b4; }

.formula { display: flex; height: 29px; padding: 1px 1px 0; border-top: 3px solid #a6c3ea; background: #fff; box-shadow: inset 0 1px #5f86b6, inset 0 -1px #5f86b6, inset 0 -4px #d5e4f5, inset 0 -5px #5f86b6; }
.formula > * { height: 20px; border: 0; }
.cell-name { width: 138px; padding: 0; text-align: center; font: inherit; font-size: 13px; color: #111; background: none; outline: 0; }
.name-drop { width: 20px; }
.fx-pad { width: 84px; display: flex; align-items: center; justify-content: space-between; padding: 0 6px 0 4px; background: linear-gradient(#e8f1fb, #a9c4e8); border-left: 1px solid #7e9dc6; border-right: 1px solid #5f86b6; border-radius: 10px 0 0 10px; }
.dot { width: 9px; height: 9px; border-radius: 50%; background: #b6c2d6; }
.fx-pad em { font: italic 16px/18px "Liberation Serif", serif; color: #333; }
.fx-pad small { font-size: 12px; }
.fx-input { flex: 1; background: none; }
.formula > .fx-more { width: 15px; background: linear-gradient(#e3eefb, #bcd2ef); border: 1px solid #7e9dc6; }

.work { flex: 1; display: flex; min-height: 300px; background: #fff; }
.sheet { position: relative; flex: 1; overflow: hidden; background: #fff; }
.dash { width: 1106px; margin-top: -16px; padding-left: 12px; color: #000; }
.panel { border: 2px solid #000; background: #fff; }
.panel > h2 { height: 26px; text-align: center; background: #000; color: #d9ff00; font: 700 21px/26px "Liberation Sans", sans-serif; }
.monthly { border-width: 3px 1px 1px 2px; }
.pair { display: grid; grid-template-columns: 534px 534px; justify-content: space-between; margin-top: 11px; }
.pair .panel { height: 275px; }
.cats { display: flex; gap: 17px; padding: 8px 0 0 24px; }
.rank { padding: 4px 0 0 9px; }
.chart { font: 12px Lato, sans-serif; fill: #000; }
.framed { border: 1px solid #868686; box-sizing: content-box; }
.ct { font-size: 22px; font-weight: 700; }
.ax { font-size: 11px; fill: #595959; }
.pt { font-size: 13px; font-weight: 700; fill: #404040; }
.cursor { position: absolute; left: 1258px; top: 427px; width: 17px; height: 15px; border: 3px solid #000; }
.cursor i { position: absolute; right: -5px; bottom: -5px; width: 6px; height: 6px; background: #000; border: 1px solid #fff; border-width: 1px 0 0 1px; }

.vbar { width: 15px; display: flex; flex-direction: column; border-left: 1px solid #7e9dc6; background: linear-gradient(90deg, #7496c6, #9bb6de); }
.split { display: block; flex: none; background: #fff; border: 1px solid #7e9dc6; }
.vbar .split { height: 7px; }
.vbar button { height: 20px; }
.vbar .down { height: 18px; }
.vbar .car { border-width: 5px 5px 0; border-top-color: #3d5076; }
.vbar .up { border-width: 0 5px 5px; border-bottom-color: #3d5076; }
.vbar .thumb { flex: 1; margin-top: 96px; border: 1px solid #5a7099; border-radius: 2px; background: repeating-linear-gradient(#5a7099 0 1px, transparent 1px 3px) center / 7px 8px no-repeat, linear-gradient(90deg, #e9eef5, #dfe6ef 50%, #b7c5da); }

.sheetbar { display: flex; height: 17px; border-top: 1px solid #7f9dca; border-bottom: 1px solid #4f79b0; background: linear-gradient(#88a8d5, #a2badd); font-size: 11px; }
.seek { display: flex; align-items: center; gap: 9px; width: 63px; padding: 0 6px; background: #d0e2f7; border-right: 1px solid #7f9dca; }
.stab { position: relative; height: 15px; padding: 0 13px 0 12px; background: linear-gradient(#b9d1f2, #d9e8fa); }
.slant { position: absolute; right: -6px; top: 0; z-index: 1; }
.stab.on { font-weight: 700; font-size: 12px; background: #fff; padding: 0 8px 0 14px; }
.stab.on .slant { display: none; }
.add { width: 44px; background: #cfe0f7; clip-path: polygon(30% 0, 100% 0, 72% 100%, 0 100%); }
.hbar { display: flex; flex: 1; max-width: 778px; margin-left: auto; padding-right: 16px; background: #7f9fd0; }
.hbar .split { width: 7px; }
.hbar button { width: 24px; }
.hbar .thumb { flex: 1; border: 1px solid #5a7099; border-radius: 2px; background: repeating-linear-gradient(90deg, #5a7099 0 1px, transparent 1px 3px) center / 8px 7px no-repeat, linear-gradient(#eef2f7, #dce3ec 45%, #b4c2d6); }

.status { display: flex; justify-content: space-between; height: 21px; border-bottom: 1px solid #a7b4c8; background: linear-gradient(#dcebfb, #c9dff9 28%, #b0cff5 32%, #dbe9fa); font-size: 11px; }
.ready { width: 52px; padding-left: 7px; line-height: 20px; color: #1e1e70; border-right: 1px solid #8fb0dc; }
.zoom { display: flex; align-items: center; width: 245px; padding: 0 5px; color: #1e1e70; border-left: 1px solid #6f93c7; background: linear-gradient(#c0d7f5, #8db0e0 45%, #7da2d8 50%, #8cb0e2); }
.views { display: flex; border: 1px solid #6c8fc4; margin-right: 8px; }
.views button { width: 18px; height: 16px; background: #bcd3f3; }
.views .on { background: #ffd78a; }
.zoom > span { width: 36px; }
.zoom .rnd { width: 16px; margin: 0; }
.zoom input { appearance: none; flex: 1; min-width: 0; height: 16px; margin: 0; background: linear-gradient(transparent 7px, #47669d 7px, #47669d 8px, #dbe8fa 8px, #dbe8fa 9px, transparent 9px); }
.zoom input::-webkit-slider-thumb { appearance: none; width: 9px; height: 14px; border: 1px solid #47608c; border-radius: 1px 1px 5px 5px; background: #eaf2fc; }

.taskbar { display: flex; align-items: center; justify-content: space-between; height: 48px; background: linear-gradient(90deg, #e3eef6 0, #e0ebf8 17%, #d3dffb 25%, #d6dcee 36%, #d2e0fa 43%, #d8dcf0 55%, #d9e2f3 66%, #e3ecf5 80%); color: #1b1b1b; }
.weather { flex: 1; display: flex; align-items: center; gap: 7px; padding-left: 19px; }
.weather span { color: #555; }
.apps { display: flex; align-items: center; padding-left: 3px; }
.app { position: relative; width: 38px; height: 38px; margin: 0 3px; border-radius: 4px; }
.app.act { background: #eef3fb; box-shadow: 0 0 1px #9aa7c0; }
.run::after, .act::after { content: ""; position: absolute; bottom: 0; width: 6px; height: 3px; border-radius: 2px; background: #868b96; }
.act::after { width: 16px; background: #0a74d1; }
.search { display: flex; align-items: center; width: 218px; height: 32px; margin: 0 4px 0 3px; padding: 0 6px 0 11px; border-radius: 16px; background: #f3f7fe; box-shadow: 0 0 1px 1px #c2cde0; }
.search input { flex: 1; min-width: 0; padding: 0 0 0 10px; border: 0; outline: 0; background: none; font: 13px/20px "Open Sans", sans-serif; }
.search input::placeholder { color: #555; opacity: 1; }
.tray { flex: 1; display: flex; align-items: center; justify-content: flex-end; gap: 16px; padding-right: 21px; text-align: right; }
.tray svg + svg + svg + svg { margin-left: -9px; }
.tray p { margin: 0 -8px 0 -2px; }
</style>
